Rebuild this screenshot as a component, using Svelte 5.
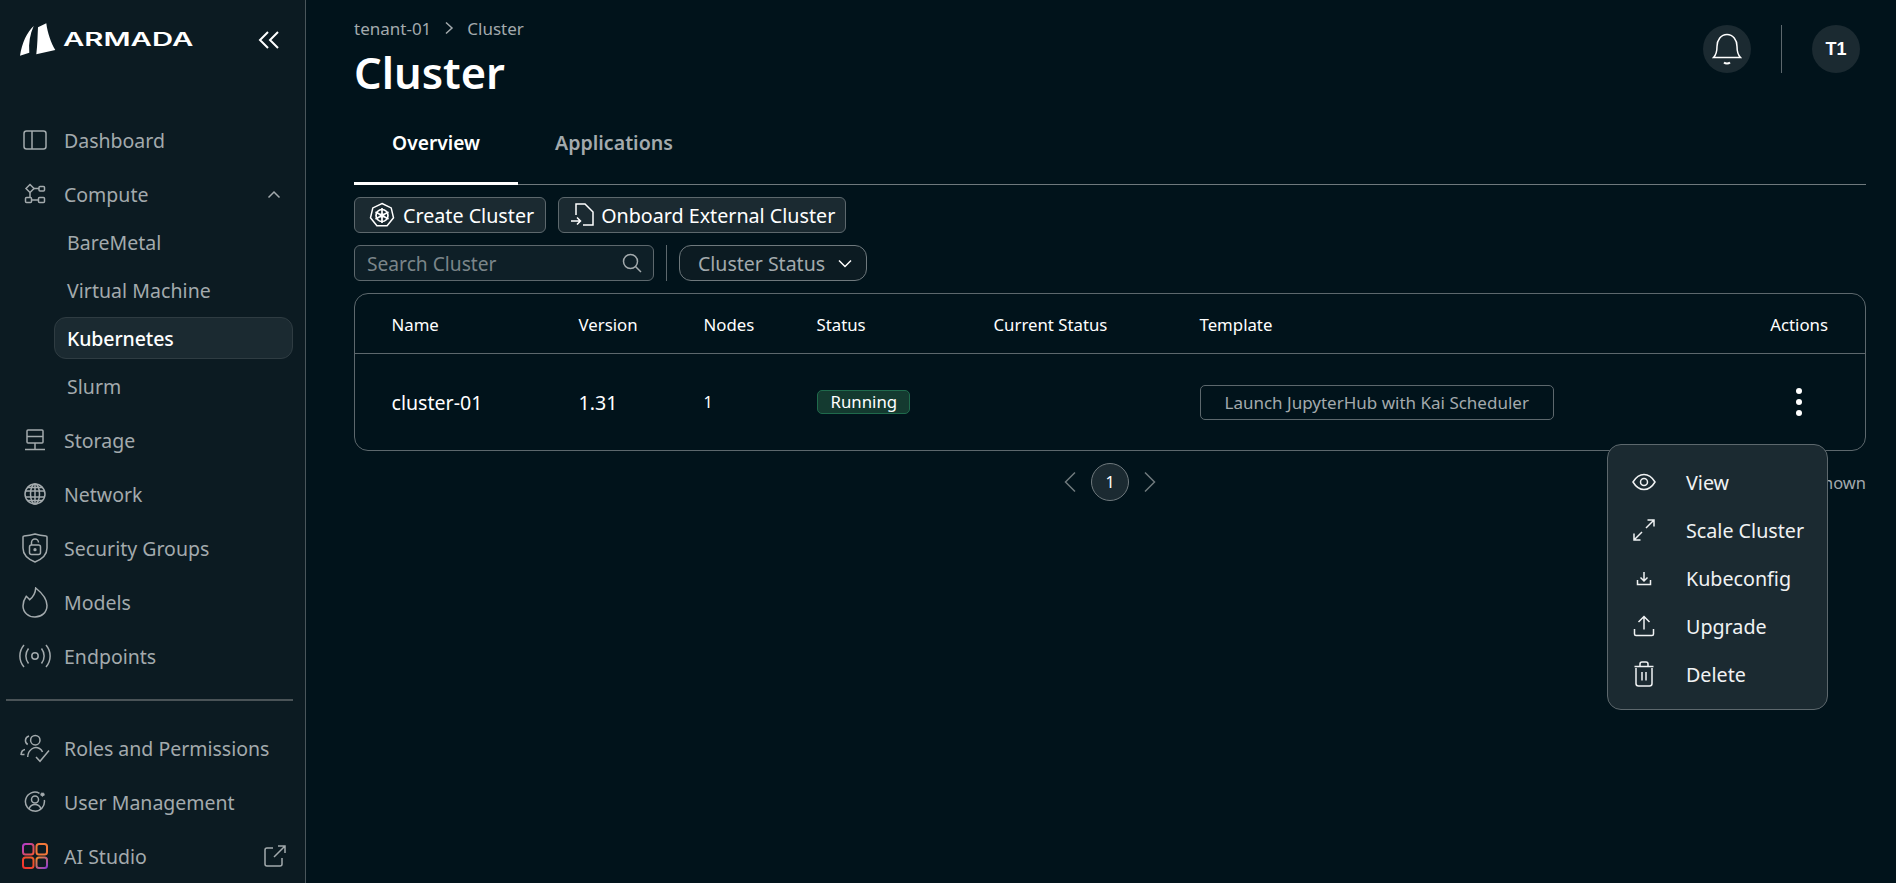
<script>
  const subs = ['BareMetal', 'Virtual Machine', 'Kubernetes', 'Slurm'];
  const columns = ['Name', 'Version', 'Nodes', 'Status', 'Current Status', 'Template', 'Actions'];
</script>

<div class="page">
  <aside class="sidebar">
    <div class="brand">
      <svg class="sail" viewBox="0 0 37 34" aria-hidden="true">
        <path d="M14.700 3C8 9 3 20 1 32.700L10.300 29.700C9.500 20 11 11 14.700 3Z" fill="#fff"/>
        <path d="M19 4.300 27.300 .3C28.500 10 32 20 36.300 27L17.300 31.300C18.500 22 18.500 13 19 4.300Z" fill="#fff"/>
      </svg>
      <span class="wordmark"><span>ARMADA</span></span>
      <svg class="collapse" viewBox="0 0 22 18" aria-hidden="true">
        <path d="M10 1 2 9l8 8M20 1l-8 8 8 8" fill="none" stroke="#fff" stroke-width="2"/>
      </svg>
    </div>

    <nav class="nav">
      <div class="item">
        <span class="ico"><svg width="24" height="20" viewBox="0 0 24 20"><rect x="1" y="1" width="22" height="18" rx="2.500"/><path d="M9 1v18"/></svg></span>
        Dashboard
      </div>
      <div class="item">
        <span class="ico"><svg width="22" height="22" viewBox="0 0 22 22"><path d="M6 1.500 10 5.500 6 9.500 2 5.500Z"/><rect x="15" y="3.500" width="5.500" height="4.500" rx="1"/><rect x="1.500" y="14.500" width="6" height="5" rx="1"/><rect x="14.500" y="14.500" width="6" height="5" rx="1"/><path d="M10 5.500h5M6 9.500v5M7.500 17h7"/></svg></span>
        Compute
        <svg class="caret" width="14" height="9" viewBox="0 0 14 9"><path d="M1.500 7.500 7 2l5.500 5.500"/></svg>
      </div>
      {#each subs as s}
        <div class="sub">
          <span class="subinner" class:active={s === 'Kubernetes'}>{s}</span>
        </div>
      {/each}
      <div class="item">
        <span class="ico"><svg width="22" height="22" viewBox="0 0 22 22"><rect x="3" y="1" width="16" height="13" rx="1"/><path d="M3 7.500h16M11 14v6M1 20.500h20"/></svg></span>
        Storage
      </div>
      <div class="item">
        <span class="ico"><svg width="22" height="22" viewBox="0 0 22 22"><circle cx="11" cy="11" r="10"/><ellipse cx="11" cy="11" rx="4.500" ry="10"/><path d="M11 1v20M1.500 8h19M1.500 14h19M3 4.500h16M3 17.500h16"/></svg></span>
        Network
      </div>
      <div class="item">
        <span class="ico"><svg width="26" height="30" viewBox="0 0 26 30"><path d="M13 1C9 2.300 5.500 2.800 2 3 1.500 3 1 3.500 1 4V15c0 6.500 4.500 11 12 14 7.500-3 12-7.500 12-14V4c0-.5-.5-1-1-1-3.500-.2-7-.7-11-2Z"/><rect x="7.500" y="12" width="11" height="9.500" rx="2"/><path d="M9.500 12V9.500a3.500 3.500 0 0 1 7 0"/><circle cx="13" cy="16.700" r=".9"/></svg></span>
        Security Groups
      </div>
      <div class="item">
        <span class="ico"><svg width="26" height="31" viewBox="0 0 26 31"><path d="M13.700 1C13.500 5 11 10 7.700 12.700 6.800 11.500 5.500 10.500 4.300 9.300 2 12.500 1 16 1 19c0 6.500 5.500 11 12 11s12-4.500 12-11.500C25 13 20 6 13.700 1Z"/></svg></span>
        Models
      </div>
      <div class="item">
        <span class="ico"><svg width="34" height="24" viewBox="0 0 34 24"><circle cx="17" cy="12" r="3.200"/><path d="M10.500 4.500c-3.500 4.500-3.500 10.500 0 15M23.500 4.500c3.500 4.500 3.500 10.500 0 15M6 1C.5 7.500.5 16.500 6 23M28 1c5.500 6.500 5.500 15.500 0 22"/></svg></span>
        Endpoints
      </div>
      <div class="rule"></div>
      <div class="item">
        <span class="ico"><svg width="30" height="29" viewBox="0 0 30 29"><circle cx="15.300" cy="6.200" r="4.700"/><path d="M9 2C4.500 3.500 4.500 8.500 7.700 10.500M7.700 23C8 16 14 11.500 19.500 14.500 20.800 15.200 22 16.500 22.500 18M1 21C1.200 17.500 3 15.800 5 15.500M1.200 20.500H4.500M16 23l4 4.300L29 16.500"/></svg></span>
        Roles and Permissions
      </div>
      <div class="item">
        <span class="ico"><svg width="22" height="22" viewBox="0 0 22 22"><path d="M15.500 2.300A9.500 9.500 0 1 0 20.300 9"/><circle cx="11" cy="8.500" r="3.500"/><path d="M5 18c1-3 3.300-4.500 6-4.500S16 15 17 18"/><circle cx="18.500" cy="3.500" r="1.800" class="gear"/></svg></span>
        User Management
      </div>
      <div class="item">
        <span class="ico"><svg width="26" height="26" viewBox="0 0 26 26" class="studio">
          <defs>
            <linearGradient id="g" x1="0" y1="0" x2="1" y2="1"><stop offset="0" stop-color="#b23bd0"/><stop offset=".5" stop-color="#d0487a"/><stop offset="1" stop-color="#f5563a"/></linearGradient>
            <linearGradient id="h" x1="0" y1="1" x2="1" y2="0"><stop offset="0" stop-color="#ef3030"/><stop offset="1" stop-color="#f0602a"/></linearGradient>
            <linearGradient id="k" x1="0" y1="0" x2="1" y2="1"><stop offset="0" stop-color="#f08a2c"/><stop offset="1" stop-color="#8a3ad0"/></linearGradient>
          </defs>
          <rect x="1" y="1" width="10.500" height="10.500" rx="2.500" stroke="url(#g)"/>
          <rect x="14.500" y="1" width="10.500" height="10.500" rx="2.500" stroke="#f2783a"/>
          <rect x="1" y="14.500" width="10.500" height="10.500" rx="2.500" stroke="url(#h)"/>
          <rect x="14.500" y="14.500" width="10.500" height="10.500" rx="2.500" stroke="url(#k)"/>
        </svg></span>
        AI Studio
        <svg class="ext" width="22" height="22" viewBox="0 0 22 22"><path d="M9 3H3a2 2 0 0 0-2 2v14a2 2 0 0 0 2 2h13a2 2 0 0 0 2-2v-6M10 12 21 1M14 1h7v7"/></svg>
      </div>
    </nav>
  </aside>

  <main class="main">
    <header class="top">
      <div class="titles">
        <div class="crumbs">
          <span>tenant-01</span>
          <svg width="10" height="14" viewBox="0 0 10 14"><path d="M2 1.500 8 7l-6 5.500"/></svg>
          <span>Cluster</span>
        </div>
        <h1>Cluster</h1>
      </div>
      <div class="account">
        <span class="round">
          <svg width="30" height="32" viewBox="0 0 30 32"><path d="M1.500 24.500h27c-3-3-3.500-6-3.500-11C25 7 21 1.500 15 1.500S5 7 5 13.500c0 5-.5 8-3.500 11Z"/><path d="M12 29.500c1.500 1.300 4.500 1.300 6 0" stroke-width="2"/></svg>
        </span>
        <span class="vr"></span>
        <span class="round initials">T1</span>
      </div>
    </header>

    <div class="tabs">
      <span class="tab on">Overview</span>
      <span class="tab">Applications</span>
    </div>

    <div class="actions">
      <button class="btn">
        <svg width="26" height="26" viewBox="0 0 26 26"><path d="M13 1.500 22.200 5.900 24.500 15.800 18.100 23.800H7.900L1.500 15.800 3.800 5.900Z"/><circle cx="13" cy="13.500" r="6" stroke-width="1.700"/><circle cx="13" cy="13.500" r="1.600" fill="#fff"/><path d="M13 6v15M6.500 10l13 7M19.500 10l-13 7" stroke-width="1.700"/></svg>
        Create Cluster
      </button>
      <button class="btn tight">
        <svg width="24" height="24" viewBox="0 0 24 24"><path d="M6 12V1h9l8 8v13H13M1 18h9M7 14.500l3.500 3.500L7 21.500"/></svg>
        Onboard External Cluster
      </button>
    </div>

    <div class="filters">
      <div class="search">
        <span>Search Cluster</span>
        <svg width="20" height="20" viewBox="0 0 20 20"><circle cx="8.500" cy="8.500" r="7"/><path d="m13.500 13.500 5.500 5.500"/></svg>
      </div>
      <span class="vr2"></span>
      <div class="select">
        <span>Cluster Status</span>
        <svg width="14" height="9" viewBox="0 0 14 9"><path d="M1 1.500 7 7.500l6-6"/></svg>
      </div>
    </div>

    <section class="table">
      <div class="row head">
        {#each columns as c}<div class="cell">{c}</div>{/each}
      </div>
      <div class="row body">
        <div class="big">cluster-01</div>
        <div class="big">1.31</div>
        <div class="one">1</div>
        <div><span class="pill">Running</span></div>
        <div></div>
        <div><span class="tpl">Launch JupyterHub with Kai Scheduler</span></div>
        <div class="dots"><i></i><i></i><i></i></div>
      </div>
    </section>

    <div class="pager">
      <svg width="14" height="22" viewBox="0 0 14 22"><path d="M12 1.500 2.500 11l9.500 9.500"/></svg>
      <span class="num">1</span>
      <svg width="14" height="22" viewBox="0 0 14 22"><path d="M2 1.500 11.500 11 2 20.500"/></svg>
      <span class="shown">1 item shown</span>
    </div>
  </main>

  <div class="menu">
    <div class="mi">
      <svg width="24" height="24" viewBox="0 0 24 24"><path d="M1 12c3-5 6.500-7.500 11-7.500S20 7 23 12c-3 5-6.500 7.500-11 7.500S4 17 1 12Z"/><circle cx="12" cy="12" r="3.500"/></svg>
      View
    </div>
    <div class="mi">
      <svg width="24" height="24" viewBox="0 0 24 24"><path d="M14 10 22 2M15.500 2H22v6.500M10 14l-8 8M2 15.500V22h6.500"/></svg>
      Scale Cluster
    </div>
    <div class="mi">
      <svg width="24" height="24" viewBox="0 0 24 24"><path d="M12 6v9M8.500 11.500l3.500 3.500 3.500-3.500M5.500 14v4.500h13V14"/></svg>
      Kubeconfig
    </div>
    <div class="mi">
      <svg width="24" height="24" viewBox="0 0 24 24"><path d="M12 2.500v13M6.500 8 12 2.500 17.500 8M2.500 15v5a1.500 1.500 0 0 0 1.500 1.500h16a1.500 1.500 0 0 0 1.500-1.500v-5"/></svg>
      Upgrade
    </div>
    <div class="mi">
      <svg width="24" height="26" viewBox="0 0 24 26"><path d="M4 7v15.500a2.500 2.500 0 0 0 2.500 2.500h11a2.500 2.500 0 0 0 2.500-2.500V7M2.500 5.500h19M8 5V3a2 2 0 0 1 2-2h4a2 2 0 0 1 2 2v2M10 11v8.500M14 11v8.500"/></svg>
      Delete
    </div>
  </div>
</div>

<style>
  :global(body) {
    margin: 0;
    background: #01131b;
    font-family: "Noto Sans", "Open Sans", sans-serif;
    color: #fff;
  }
  svg {
    fill: none;
    stroke: currentColor;
    stroke-width: 1.5;
    flex: none;
  }
  .page {
    position: relative;
    display: flex;
    height: 883px;
    overflow: hidden;
  }
  .sidebar {
    width: 305px;
    flex: none;
    background: #0c1b22;
    border-right: 1px solid #4a565b;
    color: #a3aaad;
    font-size: 19.5px;
  }
  .brand {
    display: flex;
    align-items: center;
    height: 80px;
    padding-left: 19px;
    margin-bottom: 36px;
  }
  .sail {
    width: 37px;
    height: 34px;
    stroke: none;
  }
  .wordmark {
    display: block;
    width: 130px;
    margin-left: 7px;
    color: #fff;
    font-family: Inter, sans-serif;
    font-weight: 600;
    font-size: 18px;
    line-height: 20px;
  }
  .wordmark span {
    display: inline-block;
    transform: scaleX(1.63);
    transform-origin: left center;
  }
  .collapse {
    width: 22px;
    height: 18px;
    margin-left: 65px;
  }
  .nav {
    display: flex;
    flex-direction: column;
  }
  .item {
    display: flex;
    align-items: center;
    height: 48px;
    margin-bottom: 6px;
    padding-left: 18px;
    padding-right: 18px;
  }
  .sub + .item {
    margin-top: 6px;
  }
  .item:has(+ .sub) {
    margin-bottom: 0;
  }
  .ico {
    display: flex;
    justify-content: center;
    align-items: center;
    width: 34px;
    margin-right: 12px;
    color: #a3aaad;
  }
  .gear {
    fill: currentColor;
    stroke-width: 1;
    stroke-dasharray: 1.2 .8;
  }
  .studio {
    stroke-width: 2;
  }
  .caret {
    margin-left: auto;
    margin-right: 6px;
  }
  .ext {
    margin-left: auto;
    margin-right: 1px;
  }
  .sub {
    display: flex;
    align-items: center;
    height: 48px;
    padding: 0 12px 0 54px;
  }
  .subinner {
    display: block;
    width: 100%;
    margin-bottom: 1px;
    padding: 1px 13px 0 12px;
    line-height: 39px;
    border: 1px solid transparent;
    border-radius: 12px;
    letter-spacing: .05px;
  }
  .subinner.active {
    background: #1b2a31;
    border-color: #2f3c42;
    color: #fff;
    font-weight: 500;
    letter-spacing: -.1px;
  }
  .rule {
    height: 2px;
    margin: 13px 12px 23px 6px;
    background: #4a5357;
  }
  .main {
    flex: 1;
    min-width: 0;
    padding: 0 30px 0 48px;
  }
  .top {
    display: flex;
    justify-content: space-between;
    height: 118px;
  }
  .crumbs {
    display: flex;
    align-items: center;
    gap: 13px;
    height: 24px;
    margin-top: 16px;
    font-size: 17px;
    color: #a3aaad;
  }
  h1 {
    margin: 2px 0 0;
    font-size: 43.4px;
    line-height: 62px;
    font-weight: 600;
    color: #fff;
  }
  .account {
    display: flex;
    align-items: flex-start;
    padding-top: 25px;
    padding-right: 6px;
  }
  .round {
    display: flex;
    align-items: center;
    justify-content: center;
    width: 48px;
    height: 48px;
    border-radius: 50%;
    background: #1b2a31;
  }
  .initials {
    font-size: 18px;
    font-weight: 700;
    font-family: "Liberation Sans", sans-serif;
  }
  .vr {
    width: 1px;
    height: 48px;
    margin: 0 30px;
    background: #5d686d;
  }
  .tabs {
    display: flex;
    height: 66px;
    border-bottom: 1px solid #6f797d;
    box-sizing: content-box;
  }
  .tab {
    box-sizing: border-box;
    width: 164px;
    height: 67px;
    padding-top: 10px;
    text-align: center;
    font-size: 19.6px;
    line-height: 30px;
    font-weight: 600;
    color: #a3aaad;
  }
  .tab.on {
    width: 164px;
    color: #fff;
    font-size: 19.2px;
    border-bottom: 3px solid #fff;
  }
  .tab + .tab {
    width: 192px;
  }
  .actions {
    display: flex;
    gap: 12px;
    margin-top: 12px;
  }
  .btn {
    display: flex;
    align-items: center;
    gap: 8px;
    height: 36px;
    padding: 0 11px 0 14px;
    background: #1b2a31;
    border: 1px solid #5d686d;
    border-radius: 6px;
    color: #fff;
    font: inherit;
    font-size: 19.7px;
  }
  .btn.tight {
    gap: 7px;
    padding-left: 11px;
    padding-right: 10px;
  }
  .filters {
    display: flex;
    gap: 12px;
    margin-top: 12px;
  }
  .search {
    box-sizing: border-box;
    display: flex;
    align-items: center;
    justify-content: space-between;
    width: 300px;
    height: 36px;
    padding: 0 11px 0 12px;
    background: #0e1f27;
    border: 1px solid #5d686d;
    border-radius: 6px;
    color: #7b8589;
    font-size: 19.2px;
  }
  .search svg {
    color: #a3aaad;
  }
  .vr2 {
    width: 1px;
    height: 36px;
    background: #5d686d;
  }
  .select {
    box-sizing: border-box;
    display: flex;
    align-items: center;
    gap: 13px;
    height: 36px;
    padding: 0 14px 0 18px;
    background: #0c1b22;
    border: 1px solid #6f797d;
    border-radius: 12px;
    color: #a3aaad;
    font-size: 19.5px;
  }
  .select svg {
    color: #fff;
  }
  .table {
    margin-top: 12px;
    border: 1px solid #5d686d;
    border-radius: 14px;
  }
  .row {
    display: grid;
    grid-template-columns: 187px 125px 113px 177px 206px 1fr 80px;
    padding: 0 37px 0 36.500px;
    align-items: center;
    font-size: 16.800px;
  }
  .head {
    height: 59px;
    border-bottom: 1px solid #5d686d;
  }
  .head .cell {
    padding-top: 2px;
  }
  .head .cell:last-child {
    text-align: right;
  }
  .body {
    height: 96px;
  }
  .big {
    font-size: 19.600px;
  }
  .one {
    font-size: 16px;
  }
  .pill {
    display: inline-block;
    padding: 0 12px 0 13px;
    line-height: 22px;
    background: #143a30;
    border: 1px solid #1f6a4c;
    border-radius: 5px;
  }
  .tpl {
    display: inline-block;
    padding: 0 24px;
    line-height: 33px;
    font-size: 17px;
    border: 1px solid #5d686d;
    border-radius: 5px;
    color: #a3aaad;
  }
  .dots {
    display: flex;
    flex-direction: column;
    align-items: center;
    gap: 5px;
    padding-left: 22px;
  }
  .dots i {
    width: 6px;
    height: 6px;
    border-radius: 50%;
    background: #fff;
  }
  .pager {
    position: relative;
    display: flex;
    justify-content: center;
    align-items: center;
    gap: 14px;
    height: 38px;
    margin-top: 12px;
    color: #6f797d;
  }
  .num {
    box-sizing: border-box;
    display: flex;
    align-items: center;
    justify-content: center;
    width: 38px;
    height: 38px;
    border: 1px solid #6f797d;
    border-radius: 50%;
    background: #1b2a31;
    color: #fff;
    font-size: 16px;
  }
  .shown {
    position: absolute;
    right: 0;
    color: #a3aaad;
    font-size: 16.500px;
  }
  .menu {
    position: absolute;
    left: 1607px;
    top: 444px;
    box-sizing: border-box;
    width: 221px;
    height: 266px;
    padding: 13px 0;
    background: #1b2a31;
    border: 1px solid #5d686d;
    border-radius: 14px;
    font-size: 19.700px;
    color: #f0f2f3;
  }
  .mi {
    display: flex;
    align-items: center;
    height: 48px;
  }
  .mi svg {
    margin-left: 24px;
    margin-right: 30px;
  }
</style>
